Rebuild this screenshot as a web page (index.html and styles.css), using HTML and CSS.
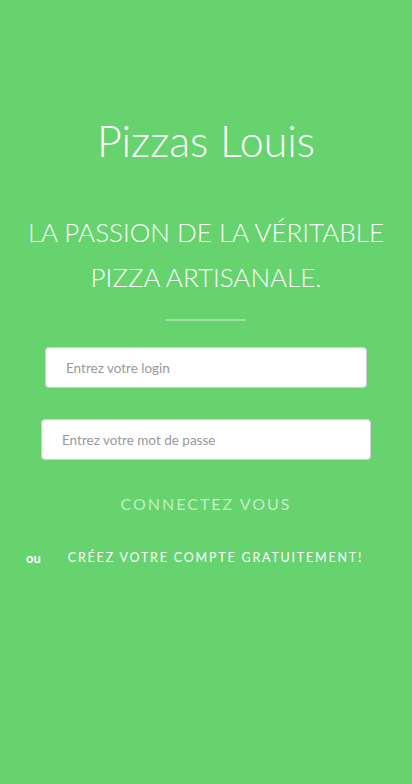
FILE: index.html
```html
<!DOCTYPE html>
<html lang="fr">
<head>
<meta charset="utf-8">
<title>Pizzas Louis</title>
<link rel="stylesheet" href="styles.css">
</head>
<body>
<main class="page">
  <h1 class="title">Pizzas Louis</h1>
  <h2 class="tagline">LA PASSION DE LA VÉRITABLE<br>PIZZA ARTISANALE.</h2>
  <hr class="divider">
  <form class="login">
    <input class="field field-login" type="text" placeholder="Entrez votre login">
    <input class="field field-pass" type="password" placeholder="Entrez votre mot de passe">
    <button class="connect" type="button">CONNECTEZ VOUS</button>
  </form>
  <div class="signup">
    <span class="or">ou</span>
    <a class="create" href="#">CRÉEZ VOTRE COMPTE GRATUITEMENT!</a>
  </div>
</main>
</body>
</html>
```
FILE: styles.css
```css
html, body {
  margin: 0;
  padding: 0;
  background: #66d36e;
  height: 100%;
}
body {
  font-family: Lato, "Open Sans", sans-serif;
  color: #fff;
}
.page {
  display: flex;
  flex-direction: column;
  align-items: center;
  padding-top: 113px;
}
.title {
  margin: 0;
  font-weight: 300;
  font-size: 43px;
  line-height: 56px;
  text-align: center;
}
.tagline {
  margin: 41px 0 0;
  font-weight: 300;
  font-size: 26px;
  line-height: 45px;
  text-align: center;
}
.divider {
  margin: 19px 0 0;
  width: 80px;
  height: 2px;
  border: 0;
  background: rgba(255,255,255,0.35);
}
.login {
  display: flex;
  flex-direction: column;
  align-items: center;
  width: 100%;
}
.field {
  box-sizing: border-box;
  height: 41px;
  border: 1px solid #d0d0d0;
  border-radius: 4px;
  background: #fff;
  font-family: Lato, sans-serif;
  font-size: 13.5px;
  color: #555;
  padding: 0 20px;
  outline: none;
}
.field::placeholder { color: #999; }
.field-login {
  margin-top: 26px;
  width: 322px;
}
.field-pass {
  margin-top: 31px;
  width: 330px;
}
.connect {
  margin-top: 32px;
  background: none;
  border: 0;
  padding: 0;
  font-family: Lato, sans-serif;
  font-size: 16px;
  line-height: 24px;
  letter-spacing: 2px;
  color: rgba(255,255,255,0.62);
}
.signup {
  align-self: stretch;
  display: flex;
  align-items: center;
  gap: 27px;
  margin-top: 32px;
  padding-left: 26px;
  line-height: 20px;
}
.or {
  font-size: 13px;
  font-weight: 700;
}
.create {
  color: #fff;
  text-decoration: none;
  font-size: 12.5px;
  letter-spacing: 1.8px;
}
```
